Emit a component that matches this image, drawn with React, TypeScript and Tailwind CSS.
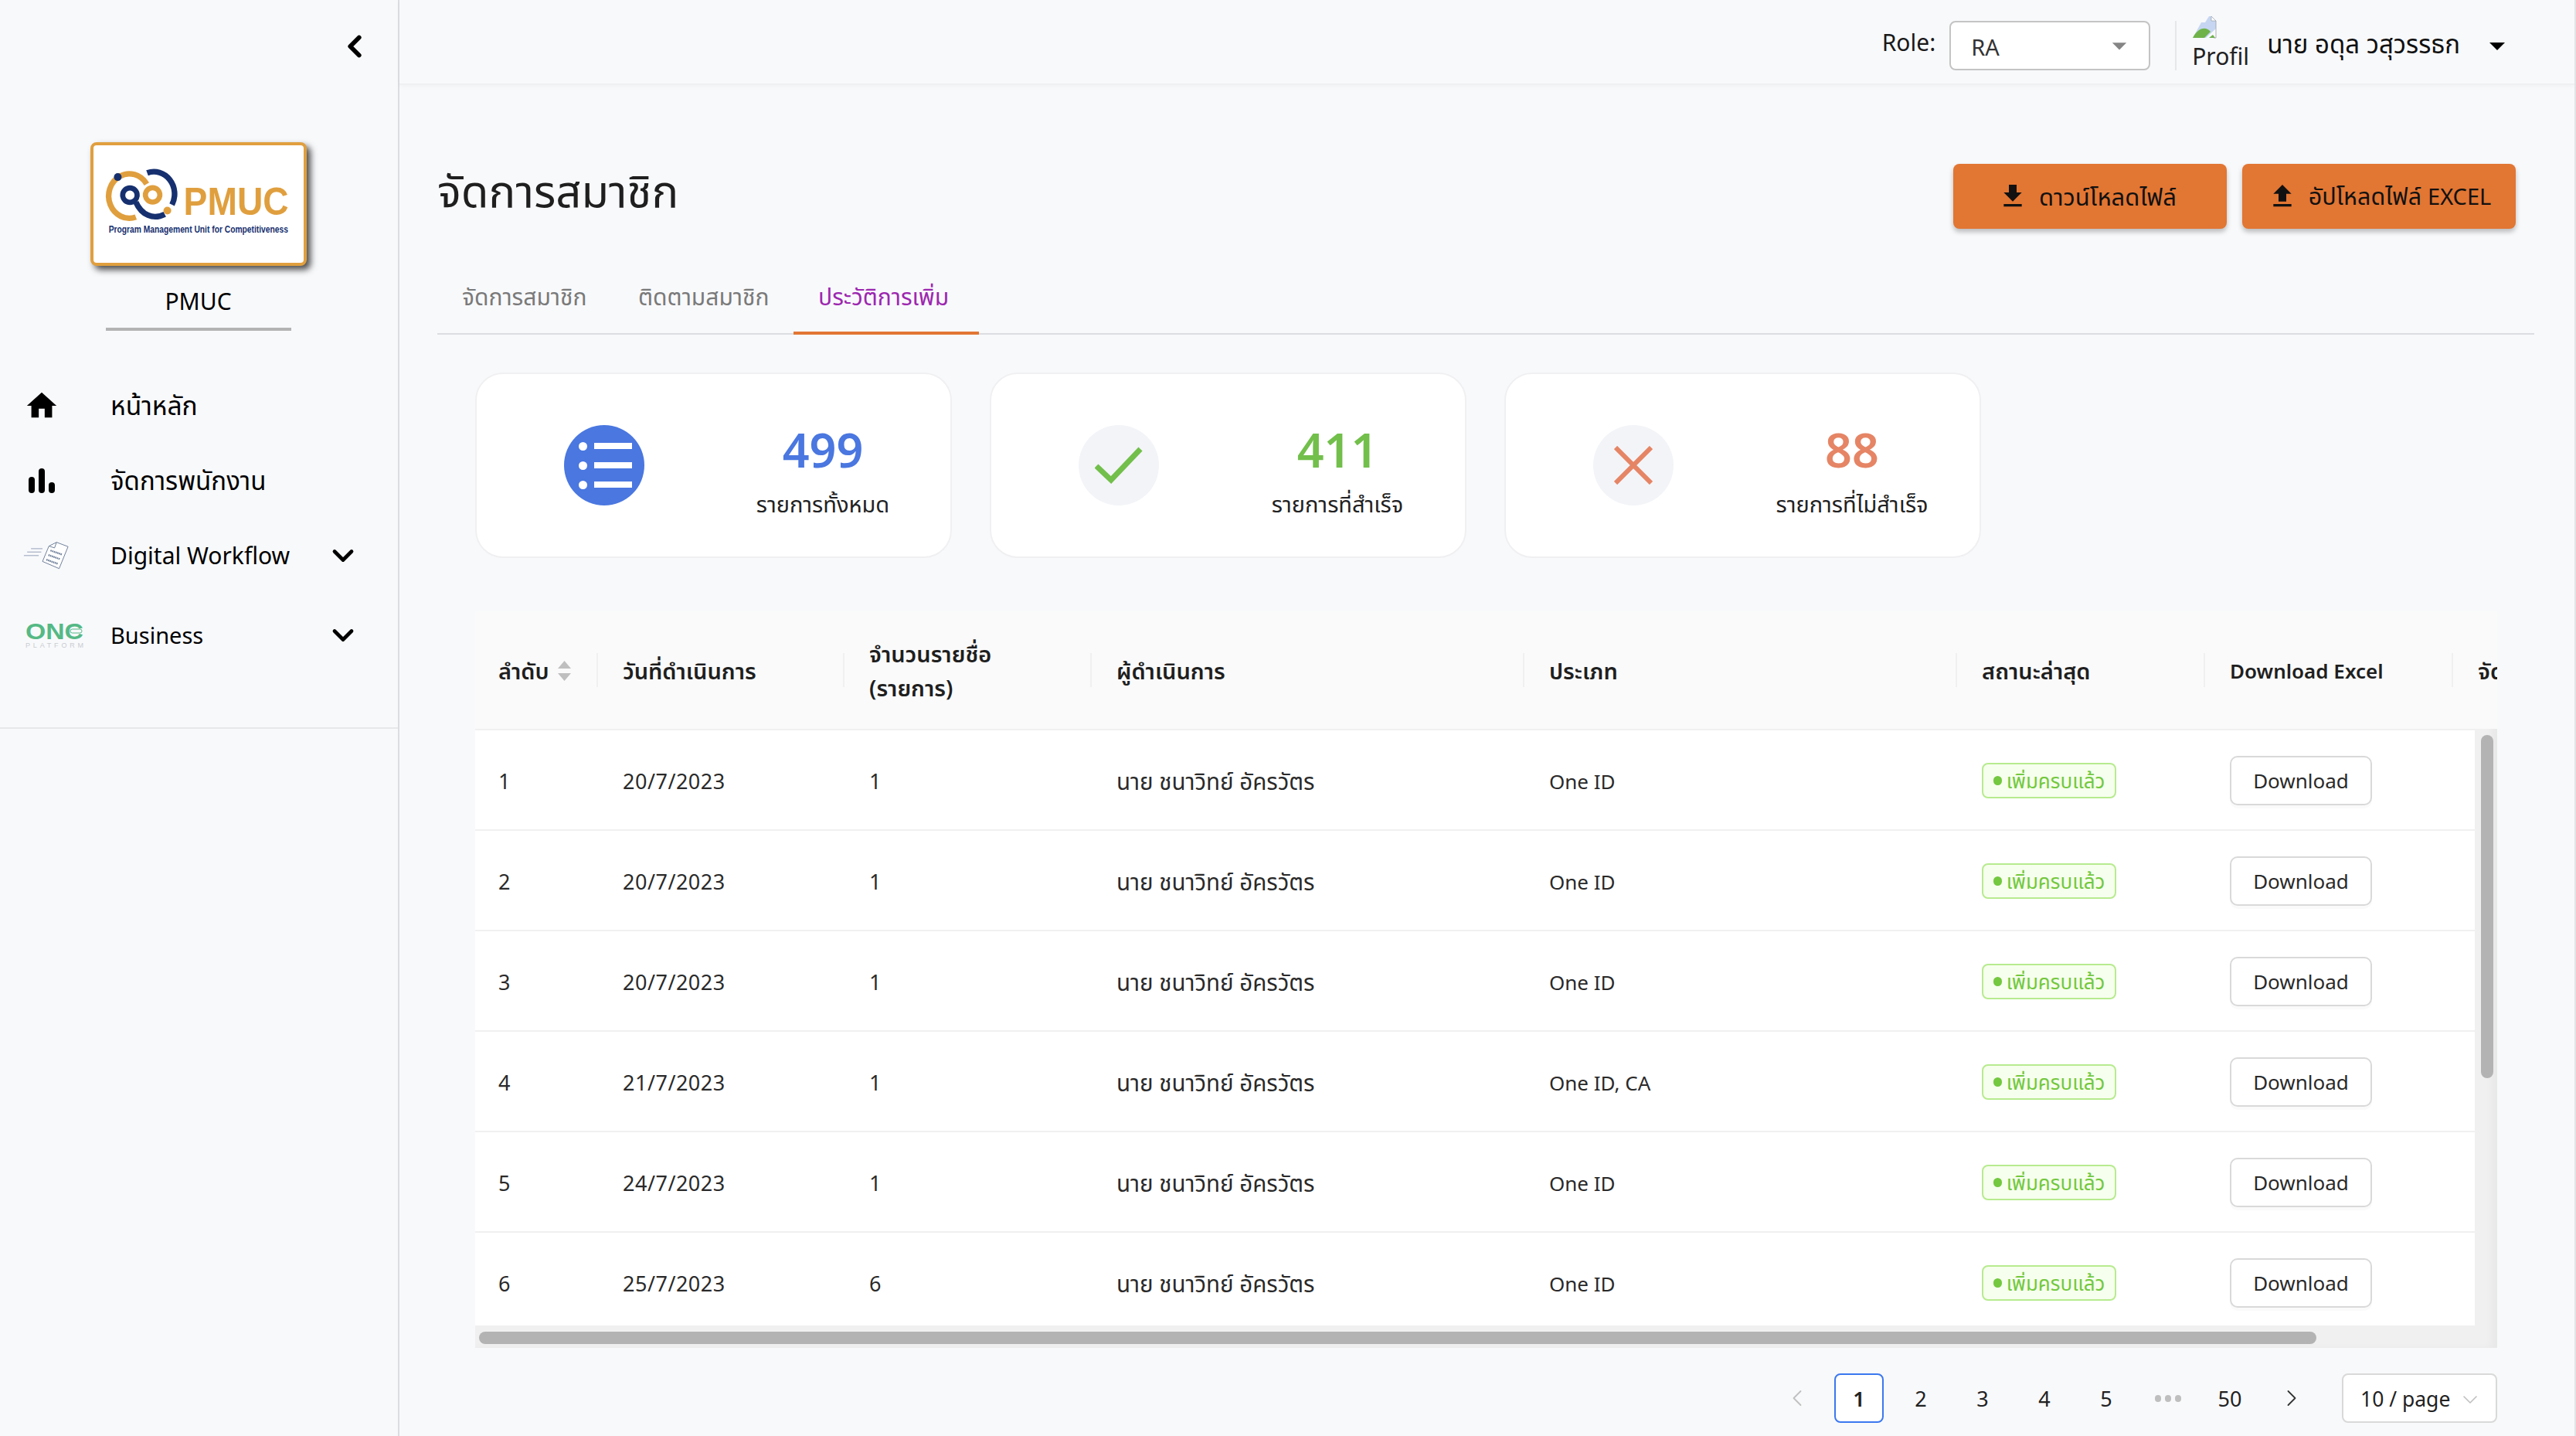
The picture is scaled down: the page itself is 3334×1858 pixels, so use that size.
import React from 'react'
import { ChevronLeft, ChevronRight, ChevronDown } from 'lucide-react'
import { MdHome, MdFileDownload, MdFileUpload, MdArrowDropDown } from 'react-icons/md'

const font = "font-['Noto_Sans','Noto_Sans_Thai','Liberation_Sans',sans-serif]"

const rows = [
  { no: 1, date: '20/7/2023', count: 1, type: 'One ID' },
  { no: 2, date: '20/7/2023', count: 1, type: 'One ID' },
  { no: 3, date: '20/7/2023', count: 1, type: 'One ID' },
  { no: 4, date: '21/7/2023', count: 1, type: 'One ID, CA' },
  { no: 5, date: '24/7/2023', count: 1, type: 'One ID' },
  { no: 6, date: '25/7/2023', count: 6, type: 'One ID' },
]

const cols = 'grid grid-cols-[159px_319px_320px_560px_560px_321px_321px_160px]'

function Logo() {
  return (
    <div className="w-[280px] h-[160px] rounded-lg border-4 border-[#e09f3e] bg-white shadow-[5px_5px_8px_rgba(0,0,0,0.7)] overflow-hidden">
      <svg viewBox="64 55 814 455" className="w-full h-full" fill="none">
        <path d="M228 333A80 86 0 1 1 270 205" stroke="#e09f3e" strokeWidth="22" />
        <circle cx="293" cy="247" r="28" stroke="#e09f3e" strokeWidth="20" />
        <path d="M272 162A80 86 0 0 1 368 285" stroke="#16306f" strokeWidth="22" />
        <circle cx="205" cy="248" r="28" stroke="#16306f" strokeWidth="20" />
        <path d="M228 275C250 325 295 345 340 322" stroke="#16306f" strokeWidth="22" />
        <circle cx="158" cy="178" r="15" fill="#16306f" />
        <circle cx="350" cy="308" r="15" fill="#e09f3e" />
        <text x="413" y="325" fill="#e09f3e" fontFamily="Liberation Sans" fontWeight="700" fontSize="150" textLength="407" lengthAdjust="spacingAndGlyphs">PMUC</text>
        <text x="123" y="393" fill="#16306f" fontFamily="Liberation Sans" fontWeight="700" fontSize="38" textLength="695" lengthAdjust="spacingAndGlyphs">Program Management Unit for Competitiveness</text>
      </svg>
    </div>
  )
}

function DocIcon() {
  return (
    <svg viewBox="30 25 180 115" className="w-[60px] h-[38px] -ml-[3px]" fill="none">
      <path d="M60 55H105M45 68H100M32 82H90" stroke="#93a0b8" strokeWidth="3" />
      <path d="M105 105L130 45L160 30L205 47L170 133Z" fill="#fff" stroke="#6f7f9a" strokeWidth="3" />
      <path d="M130 45L152 52L160 30" stroke="#6f7f9a" strokeWidth="3" />
      <path d="M136 62L182 78M128 80L174 96M120 98L164 114" stroke="#6f7f9a" strokeWidth="7" strokeDasharray="5 2" />
    </svg>
  )
}

function OneIcon() {
  return (
    <svg viewBox="0 0 76 34" className="w-[76px] h-[34px]">
      <text x="0" y="22" fill="#55b985" fontFamily="Liberation Sans" fontWeight="700" fontSize="30" textLength="75" lengthAdjust="spacingAndGlyphs">ONC</text>
      <rect x="58" y="9" width="15" height="5" rx="2.5" fill="#f8f9fb" stroke="#55b985" strokeWidth="1" />
      <text x="0" y="33" fill="#c8ccd0" fontFamily="Liberation Sans" fontSize="9" textLength="75">PLATFORM</text>
    </svg>
  )
}

function NavItem({ icon, label, size, more, h }: { icon: React.ReactNode; label: string; size: string; more?: boolean; h: string }) {
  return (
    <div className={`flex items-center pl-[33px] pr-[49px] ${h}`}>
      <div className="w-[110px] flex items-center shrink-0">{icon}</div>
      <span className={`flex-1 text-black ${size}`}>{label}</span>
      {more && <ChevronDown className="w-[44px] h-[44px] text-black" strokeWidth={2.6} />}
    </div>
  )
}

function Sidebar() {
  return (
    <aside className="w-[517px] h-full shrink-0 border-r-2 border-[#dcdde0] bg-[#f8f9fb] flex flex-col">
      <div className="flex justify-end pr-[33px] pt-[37px]">
        <ChevronLeft className="w-[46px] h-[46px] text-black" strokeWidth={3} />
      </div>
      <div className="flex flex-col items-center mt-[101px] pr-[2px]">
        <Logo />
        <div className="mt-[20px] text-[30px] text-black leading-[52px]">PMUC</div>
        <div className="mt-[8px] w-[240px] h-[4px] bg-[#b3b3b3]" />
      </div>
      <nav className="mt-[48px] pb-[64px] border-b-2 border-[#e7e8ea]">
        <NavItem h="h-[97px]" size="text-[33.5px]" icon={<MdHome className="w-[46px] h-[46px] text-black -ml-[2px]" />} label="หน้าหลัก" />
        <NavItem
          h="h-[97px]"
          size="text-[33px]"
          icon={
            <svg viewBox="0 0 34 32" className="w-[34px] h-[32px] ml-[4px]" fill="black">
              <rect x="0" y="11" width="8" height="21" rx="4" />
              <rect x="13" y="0" width="8" height="32" rx="4" />
              <rect x="26" y="18" width="8" height="14" rx="4" />
            </svg>
          }
          label="จัดการพนักงาน"
        />
        <NavItem h="h-[97px]" size="text-[30px]" icon={<DocIcon />} label="Digital Workflow" more />
        <NavItem h="h-[110px]" size="text-[29px]" icon={<OneIcon />} label="Business" more />
      </nav>
    </aside>
  )
}

function TopBar() {
  return (
    <header className="h-[110px] shrink-0 flex items-center justify-end pt-[10px] pr-[76px] border-b-2 border-[#eff0f2] shadow-[0_2px_6px_rgba(0,0,0,0.03)]">
      <span className="text-[30px] text-[#1a1a1a] mr-[18px] -mt-[10px]">Role:</span>
      <div className="w-[260px] h-[64px] bg-white border-2 border-[#c4c4c4] rounded-lg flex items-center pl-[26px] pr-[16px] justify-between">
        <span className="text-[29px] text-[#333] mt-[4px]">RA</span>
        <MdArrowDropDown className="w-[44px] h-[44px] text-[#858585]" />
      </div>
      <div className="ml-[32px] w-[2px] h-[64px] bg-[#e6e7e9]" />
      <div className="ml-[20px] w-[74px] h-[72px] overflow-hidden -mt-[6px]">
        <svg viewBox="0 0 32 30" className="w-[32px] h-[30px]">
          <path d="M1 29L12 9L17 9L22 1L25 1L31 7L31 17L18 29Z" fill="#c6d6f2" />
          <path d="M25 1V7H31Z" fill="#fff" stroke="#9aa0a6" strokeWidth="0.7" />
          <path d="M1 29C7 17 17 13 24 21L16 29Z" fill="#6fb24a" />
          <path d="M22 29L27 25L30 29Z" fill="#6fb24a" />
          <path d="M31 7V29H28" fill="none" stroke="#9aa0a6" strokeWidth="0.8" />
        </svg>
        <div className="mt-[5px] text-[30px] leading-[36px] text-[#222] whitespace-nowrap">Profile</div>
      </div>
      <span className="ml-[23px] text-[33px] text-[#111] -mt-[4px]">นาย อดุล วสุวรรธก</span>
      <MdArrowDropDown className="ml-[24px] w-[48px] h-[48px] text-black" />
    </header>
  )
}

function OrangeBtn({ icon, children, className = '' }: { icon: React.ReactNode; children: React.ReactNode; className?: string }) {
  return (
    <button className={`w-[354px] h-[84px] rounded-lg bg-[#e27633] shadow-[0_4px_6px_rgba(0,0,0,0.25)] flex items-center justify-center gap-[14px] text-[#111] ${className}`}>
      {icon}
      {children}
    </button>
  )
}

function StatCard({ icon, value, label, color }: { icon: React.ReactNode; value: string; label: string; color: string }) {
  return (
    <div className="w-[617px] h-[240px] bg-white border-2 border-[#f0f0f2] rounded-[36px] flex items-center">
      <div className="w-[330px] flex justify-center shrink-0">{icon}</div>
      <div className="w-[236px] flex flex-col items-center shrink-0">
        <span className={`text-[61px] font-semibold leading-[80px] ${color}`}>{value}</span>
        <span className="text-[29px] leading-[40px] mt-[10px] -mb-[10px] text-[#222] whitespace-nowrap">{label}</span>
      </div>
    </div>
  )
}

function HeadCell({ children, size = 'text-[29px]', pad = 'pl-[32px]', sep = true }: { children: React.ReactNode; size?: string; pad?: string; sep?: boolean }) {
  return (
    <div className={`relative flex items-center pt-[2px] font-semibold text-[#1f1f1f] leading-[44px] ${pad} ${size}`}>
      {children}
      {sep && <span className="absolute right-0 top-[54px] w-[2px] h-[44px] bg-[#f0f0f0]" />}
    </div>
  )
}

export default function App() {
  return (
    <div className={`${font} w-[3334px] h-[1858px] overflow-hidden flex bg-[#f8f9fb] border-r-2 border-[#e3e4e6]`}>
      <Sidebar />
      <div className="flex-1 min-w-0 flex flex-col">
        <TopBar />
        <main className="flex-1 min-h-0 pl-[49px] pr-[52px] flex flex-col">
          <div className="flex items-start justify-between pr-[24px] pt-[102px] h-[194px]">
            <h1 className="text-[58px] leading-[72px] text-[#1f1f1f] -mt-[2px]">จัดการสมาชิก</h1>
            <div className="flex gap-[20px]">
              <OrangeBtn className="pr-[8px]" icon={<MdFileDownload className="w-[40px] h-[40px]" />}>
                <span className="text-[31px]">ดาวน์โหลดไฟล์</span>
              </OrangeBtn>
              <OrangeBtn icon={<MdFileUpload className="w-[40px] h-[40px]" />}>
                <span className="text-[30.5px]">
                  อัปโหลดไฟล์ <span className="text-[29px]">EXCEL</span>
                </span>
              </OrangeBtn>
            </div>
          </div>

          <div className="flex h-[129px] border-b-2 border-[#dcdde0] text-[30px] items-stretch">
            <div className="w-[228px] pt-[57px] pl-[32px] text-[#7a7a7a]">จัดการสมาชิก</div>
            <div className="w-[233px] pt-[57px] pl-[32px] text-[#7a7a7a]">ติดตามสมาชิก</div>
            <div className="w-[240px] pt-[57px] pl-[32px] text-[#9c27b0] border-b-4 border-[#e27633] -mb-[2px]">ประวัติการเพิ่ม</div>
          </div>

          <div className="flex gap-[49px] pl-[49px] mt-[49px]">
            <StatCard
              icon={
                <div className="w-[104px] h-[104px] rounded-full bg-[#4a77e0] flex flex-col justify-center gap-[14px] pl-[19px]">
                  {[0, 1, 2].map(i => (
                    <div key={i} className="flex items-center gap-[9px]">
                      <span className="w-[11px] h-[11px] rounded-full bg-white" />
                      <span className="w-[49px] h-[8px] bg-white" />
                    </div>
                  ))}
                </div>
              }
              value="499"
              label="รายการทั้งหมด"
              color="text-[#4a77e0]"
            />
            <StatCard
              icon={
                <div className="w-[104px] h-[104px] rounded-full bg-[#f3f4f8] flex items-center justify-center">
                  <svg viewBox="0 0 62 50" className="w-[62px] h-[50px]" fill="none" stroke="#72bf4b" strokeWidth="7">
                    <path d="M2 26L21 44L59 4" />
                  </svg>
                </div>
              }
              value="411"
              label="รายการที่สำเร็จ"
              color="text-[#72bf4b]"
            />
            <StatCard
              icon={
                <div className="w-[104px] h-[104px] rounded-full bg-[#f3f4f8] flex items-center justify-center">
                  <svg viewBox="0 0 50 50" className="w-[50px] h-[50px]" fill="none" stroke="#e58565" strokeWidth="6">
                    <path d="M2 2L48 48M48 2L2 48" />
                  </svg>
                </div>
              }
              value="88"
              label="รายการที่ไม่สำเร็จ"
              color="text-[#e58565]"
            />
          </div>

          <div className="ml-[49px] mt-[69px] w-[2617px] h-[953px] relative overflow-hidden bg-[#f0f0f0] shadow-[inset_-8px_0_8px_rgba(0,0,0,0.03)]">
            <div className={`${cols} w-[2780px] h-[152px] bg-[#fafafa]`}>
              <HeadCell pad="pl-[30px]">
                <span>ลำดับ</span>
                <svg viewBox="0 0 17 26" className="ml-[11px] w-[17px] h-[26px]" fill="#bfbfbf">
                  <path d="M8.5 0L17 10H0Z" />
                  <path d="M8.5 26L17 16H0Z" />
                </svg>
              </HeadCell>
              <HeadCell>วันที่ดำเนินการ</HeadCell>
              <HeadCell>
                <span>
                  จำนวนรายชื่อ
                  <br />
                  (รายการ)
                </span>
              </HeadCell>
              <HeadCell>ผู้ดำเนินการ</HeadCell>
              <HeadCell>ประเภท</HeadCell>
              <HeadCell>สถานะล่าสุด</HeadCell>
              <HeadCell size="text-[26px]">Download Excel</HeadCell>
              <HeadCell sep={false}>จัดการ</HeadCell>
            </div>
            <div className="absolute left-0 top-[154px] w-[2588px] h-[770px] overflow-hidden bg-white">
              {rows.map(r => (
                <div key={r.no} className={`${cols} w-[2780px] h-[130px] pt-[4px] border-b-2 border-[#f0f0f0] text-[#2a2a2a]`}>
                  <div className="pl-[30px] flex items-center text-[27px]">{r.no}</div>
                  <div className="pl-[32px] flex items-center text-[27px] tracking-[0.5px]">{r.date}</div>
                  <div className="pl-[32px] flex items-center text-[27px]">{r.count}</div>
                  <div className="pl-[32px] flex items-center text-[29.5px]">นาย ชนาวิทย์ อัครวัตร</div>
                  <div className="pl-[32px] flex items-center text-[26px]">{r.type}</div>
                  <div className="pl-[32px] flex items-center -mt-[2px]">
                    <span className="w-[174px] h-[46px] rounded-lg border-2 border-[#b7eb8f] bg-[#f6ffed] flex items-center justify-center gap-[6px] text-[26px] text-[#73c83f]">
                      <span className="w-[11px] h-[12px] rounded-full bg-[#73c83f]" />
                      เพิ่มครบแล้ว
                    </span>
                  </div>
                  <div className="pl-[32px] flex items-center -mt-[2px]">
                    <button className="w-[184px] h-[64px] bg-white border-2 border-[#d9d9d9] rounded-[10px] shadow-[0_4px_0_rgba(0,0,0,0.02)] text-[26px]">Download</button>
                  </div>
                  <div />
                </div>
              ))}
            </div>
            {/* scrollbars are only painted, the table does not scroll */}
            <div className="absolute left-[2596px] top-[160px] w-[16px] h-[444px] rounded-full bg-[#b3b3b3]" />
            <div className="absolute left-[5px] top-[932px] w-[2378px] h-[16px] rounded-full bg-[#b3b3b3]" />
          </div>

          <div className="mt-[33px] ml-[49px] w-[2617px] flex items-center justify-end text-[27px] text-[#222]">
            <div className="w-[64px] flex justify-center"><ChevronLeft className="w-[36px] h-[36px] text-[#bfbfbf]" strokeWidth={1.2} /></div>
            <div className="ml-[16px] w-[64px] h-[64px] pt-[3px] rounded-lg border-2 border-[#3b78f0] bg-white font-semibold flex items-center justify-center">1</div>
            {['2', '3', '4', '5'].map(p => (
              <div key={p} className="ml-[16px] w-[64px] h-[64px] pt-[3px] flex items-center justify-center">{p}</div>
            ))}
            <div className="ml-[16px] w-[64px] flex justify-center gap-[5px]">
              {[0, 1, 2].map(i => <span key={i} className="w-[8px] h-[9px] rounded-full bg-[#bfbfbf]" />)}
            </div>
            <div className="ml-[16px] w-[64px] h-[64px] pt-[3px] flex items-center justify-center">50</div>
            <div className="ml-[16px] w-[64px] flex justify-center"><ChevronRight className="w-[36px] h-[36px] text-[#333]" strokeWidth={1.2} /></div>
            <div className="ml-[33px] w-[201px] h-[64px] pt-[3px] rounded-lg border-2 border-[#d9d9d9] bg-white flex items-center pl-[22px] gap-[10px] text-[26.5px]">
              10 / page
              <ChevronDown className="w-[32px] h-[32px] text-[#bfbfbf]" strokeWidth={1.2} />
            </div>
          </div>
        </main>
      </div>
    </div>
  )
}
